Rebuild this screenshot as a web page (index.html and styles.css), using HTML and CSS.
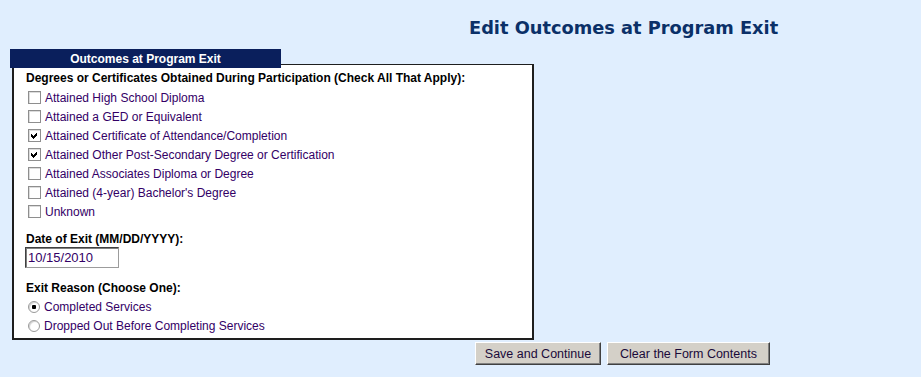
FILE: index.html
```html
<!DOCTYPE html>
<html lang="en">
<head>
  <meta charset="UTF-8">
  <title>Edit Outcomes at Program Exit</title>
  <link rel="stylesheet" href="styles.css">
</head>
<body>

<h1 class="page-title">Edit Outcomes at Program Exit</h1>

<form class="outcomes">
  <div class="tab">Outcomes at Program Exit</div>
  <div class="box">
    <div class="label">Degrees or Certificates Obtained During Participation (Check All That Apply):</div>
    <label class="opt"><input type="checkbox"> Attained High School Diploma</label>
    <label class="opt"><input type="checkbox"> Attained a GED or Equivalent</label>
    <label class="opt"><input type="checkbox" checked> Attained Certificate of Attendance/Completion</label>
    <label class="opt"><input type="checkbox" checked> Attained Other Post-Secondary Degree or Certification</label>
    <label class="opt"><input type="checkbox"> Attained Associates Diploma or Degree</label>
    <label class="opt"><input type="checkbox"> Attained (4-year) Bachelor's Degree</label>
    <label class="opt"><input type="checkbox"> Unknown</label>

    <div class="label date-label">Date of Exit (MM/DD/YYYY):</div>
    <input class="date" type="text" value="10/15/2010">

    <div class="label reason-label">Exit Reason (Choose One):</div>
    <label class="opt radio"><input type="radio" name="reason" checked> Completed Services</label>
    <label class="opt radio"><input type="radio" name="reason"> Dropped Out Before Completing Services</label>
  </div>

  <div class="buttons">
    <button type="button" class="btn btn-save">Save and Continue</button>
    <button type="reset" class="btn btn-clear">Clear the Form Contents</button>
  </div>
</form>

</body>
</html>
```

FILE: styles.css
```css
body {
  background-color: #e0eefe;
  font-family: "Liberation Sans", Arial, sans-serif;
  font-size: 12px;
  color: #330066;
  margin: 0;
  padding: 0;
}

.page-title {
  font-family: "DejaVu Sans", Verdana, sans-serif;
  font-size: 17.8px;
  font-weight: bold;
  color: #0b3068;
  margin: 0 0 0 469px;
  padding-top: 18px;
  height: 31px;
  line-height: 20px;
}

.outcomes {
  margin: 0;
}

.tab {
  position: relative;
  z-index: 1;
  width: 271px;
  height: 19px;
  margin-left: 10px;
  margin-bottom: -4px;
  background-color: #0a1f5c;
  color: #fff;
  font-weight: bold;
  text-align: center;
  line-height: 20px;
}

.box {
  width: 502px;
  margin-left: 12px;
  background-color: #fff;
  border: 2px solid #1e1e1e;
  border-top-width: 1px;
  padding: 4px 4px 3px 12px;
}

.label {
  color: #000;
  font-weight: bold;
  height: 19px;
  line-height: 19px;
}

.opt {
  display: flex;
  align-items: center;
  height: 19px;
  padding-left: 2px;
}

.opt input {
  appearance: none;
  -webkit-appearance: none;
  width: 13px;
  height: 13px;
  margin: 0 4px 0 0;
  border: 1px solid #8e8e8e;
  background: #fff;
  box-shadow: inset 1px 1px 0 #dcdcdc;
  flex: none;
}

.opt input:checked {
  background: #fff url("data:image/svg+xml,%3Csvg xmlns='http://www.w3.org/2000/svg' width='11' height='11' viewBox='0 0 11 11' shape-rendering='crispEdges'%3E%3Cpath d='M2 4 L4 6 L8 2 L8 5 L4 9 L2 7 Z' fill='%23000'/%3E%3C/svg%3E") no-repeat center;
}

.opt.radio input {
  width: 12px;
  height: 12px;
  border-radius: 50%;
  border-color: #9a9a9a;
  box-shadow: inset 1px 1px 1px #d0d0d0;
}

.opt.radio input:checked {
  background: radial-gradient(circle, #000 0 2px, #fff 2.5px);
}

.date-label {
  margin-top: 10px;
  height: 16px;
  line-height: 16px;
}

.date {
  display: block;
  width: 94px;
  height: 21px;
  box-sizing: border-box;
  margin: 0 0 0 -1px;
  padding: 0 2px;
  border: 1px solid #9c9c9c;
  border-top-color: #404040;
  border-left-color: #404040;
  box-shadow: inset 1px 1px 0 #808080;
  font-family: "Liberation Sans", Arial, sans-serif;
  font-size: 13px;
  color: #330066;
}

.reason-label {
  margin-top: 12px;
  height: 16px;
  line-height: 16px;
  margin-bottom: 1px;
}

.buttons {
  display: flex;
  gap: 6px;
  margin: 2px 0 0 475px;
}

.btn {
  height: 23px;
  padding: 0;
  background-color: #d4d0c8;
  border: 1px solid;
  border-color: #fff #404040 #404040 #fff;
  box-shadow: inset -1px -1px 0 #808080;
  font-family: "Liberation Sans", Arial, sans-serif;
  font-size: 12.5px;
  color: #1a0a3a;
  cursor: pointer;
}

.btn-save {
  width: 126px;
}

.btn-clear {
  width: 163px;
}
```
